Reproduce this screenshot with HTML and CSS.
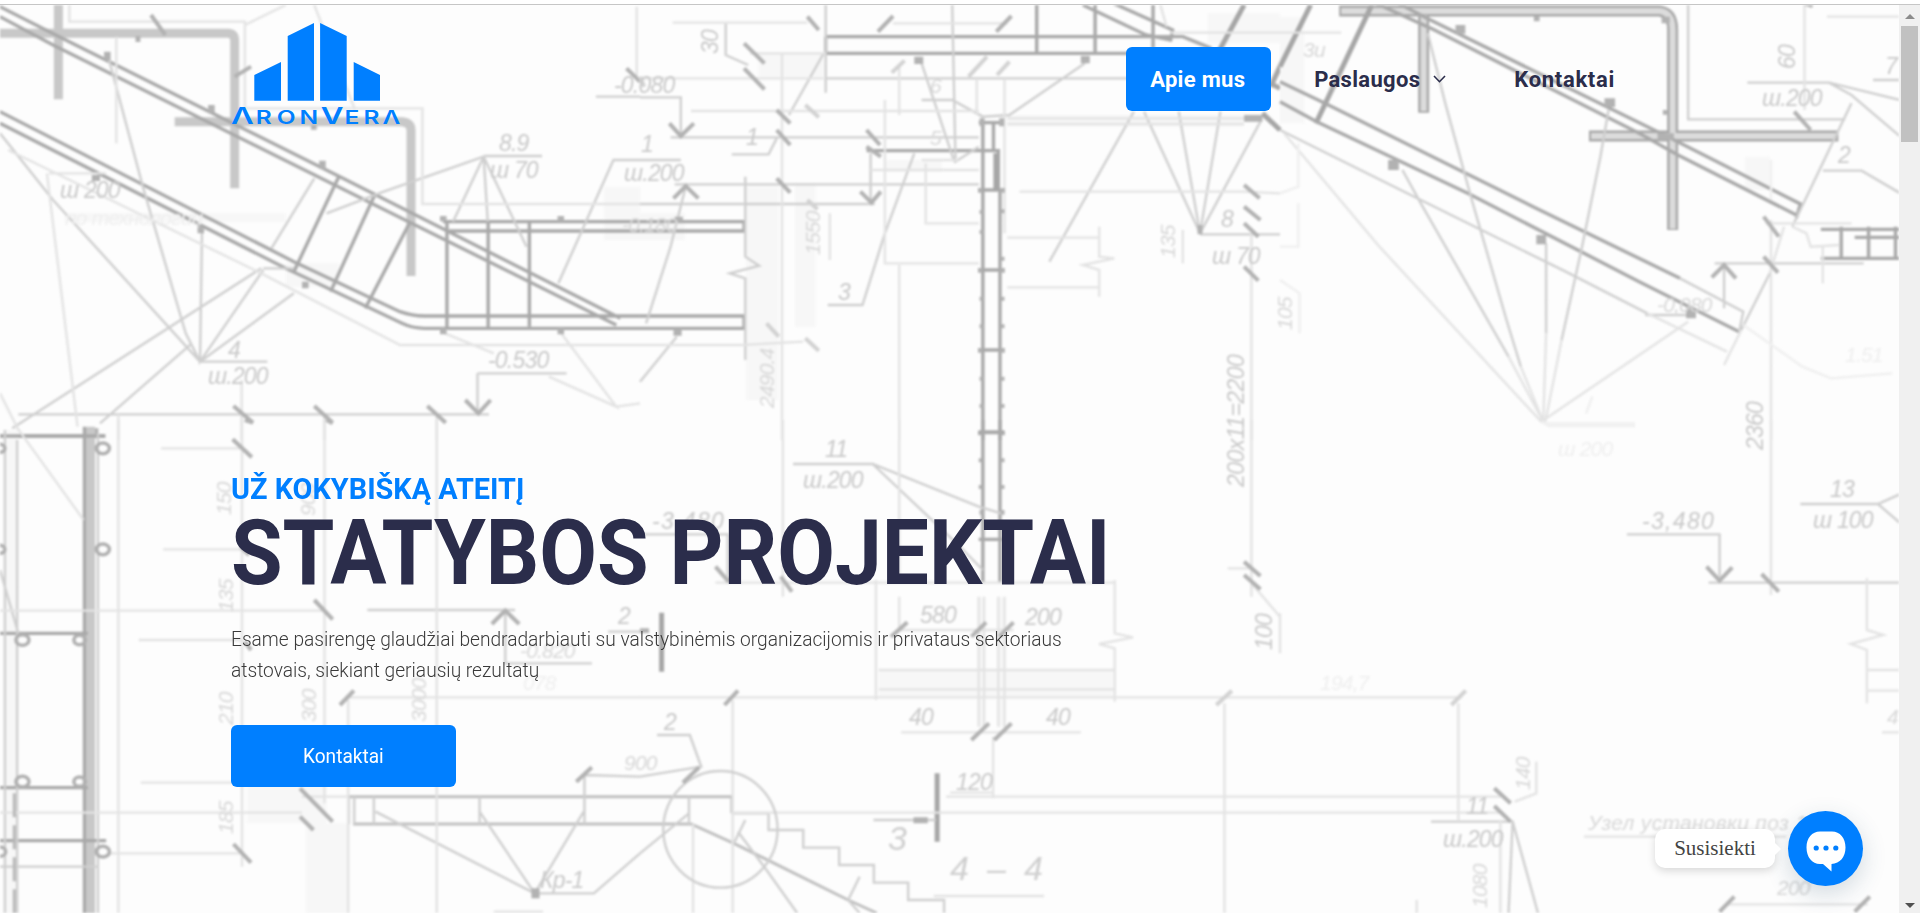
FILE: index.html
```html
<!DOCTYPE html>
<html lang="lt">
<head>
<meta charset="utf-8">
<title>AronVera</title>
<link rel="stylesheet" href="styles.css">
</head>
<body>
<div class="topline"></div>
<div class="window">
<main class="page">
<svg class="blueprint" viewBox="0 5 1899 908" aria-hidden="true">
<g transform="scale(.40816 .33333)">
<path class="haze" d="M160 640H700V665H160ZM1480 560H1568V720H1480ZM700 790H830V860H700Z"/>
<path class="t" d="M0 100H560Q575 102 575 120V565M143 15V298M428 365H985Q1007 368 1007 390V828"/>
<path class="k" d="M0 20L145 110L840 535L1520 955M0 50L130 135L820 555L1510 975M0 335L720 785L980 935Q1010 948 1040 948H1568M0 370L700 805L985 970Q1010 985 1040 985H1568M1085 665H1568M1100 693H1568M0 1308H258"/>
<path class="k" d="M830 530L720 815M918 585L810 875M1005 665L895 925M1095 665V985M1196 665V985M1297 665V980"/>
<path class="m" d="M265 170L350 560L455 1000L490 1085L130 600L0 400M495 690L490 1085L645 810M490 1085L720 880M640 805L30 1285M470 1030L245 1270M1185 470L1110 665M1185 470L1195 665M1185 470L1290 740M1185 470L940 575L800 640M1185 468H1328M490 1085H655M1170 1120H1388M1170 1120V1240M45 1243H1198M1568 480H1503L1368 850M770 535L665 745M1460 290H1568M645 805H720"/>
<path class="l" d="M170 15V65H600V325H1035V612H1568M115 520L190 1280M0 1180L45 1290M20 450L640 820L980 1035H1568M1090 1000L1210 1060M1375 1000L1510 1220L1345 1130M1510 1220L1568 1210M592 1140V1320M795 1245V1320M1070 1245V1320M290 1243V1320M120 520H260M600 75L700 15M770 15L870 330M1560 20V230M285 110V430"/>
<path class="x" d="M572 1218L620 1268M770 1218L815 1268M1047 1218L1092 1268M1140 1200L1172 1240L1202 1200M370 45L405 105M575 230L615 200M1535 205L1568 245"/>
<path class="dot" d="M255 155h16v25h-16zM510 315h16v25h-16zM782 482h16v25h-16zM332 108h12v18h-12zM225 525h20v18h-20zM484 680h16v20h-16zM740 845h16v20h-16zM1078 648h16v16h-16zM1366 648h16v16h-16zM1078 985h16v18h-16zM1366 985h16v18h-16zM762 375h14v14h-14zM205 1285h36v30h-36z"/>
</g>
<g transform="translate(640 0) scale(.40816 .33333)">
<path class="haze" d="M290 160H450V230H290ZM0 640H110V720H0ZM600 480H740V515H600ZM380 550H430V980H380ZM900 345H1480V380H900ZM1390 40H1568V130H1390ZM260 560H340V1200H260Z"/>
<path class="k" d="M455 110H1330L1400 145M455 160H1200M455 110V160M972 15V160M1115 15V160M1257 15V145M1085 15L1240 105L1300 120L1305 90L1160 10M0 665H255V693H0M0 948H255V985H0M555 452H878V570M840 360V1320M882 570V1320M830 368H890M866 370V450M830 570H890M830 810H890M830 1050H890M830 1298H890"/>
<path class="b" d="M1480 15L1420 150M1568 200L1545 260M1545 250L1568 265M1525 340L1568 390M872 460V570"/>
<path class="m" d="M455 15V278M455 235H1200M690 190L770 485M1090 190L905 345L840 350L765 300H690M765 15L773 485L830 440M0 292H100V405M75 412H830M85 553H830M0 612H575M450 160L365 345M0 480H100M225 463H315L335 415M1210 335L1003 785M1235 335L1372 700M1320 335L1372 700M1422 335L1372 700M1520 365L1372 700M1372 703H1568M672 460L600 700L545 915H460M112 560L75 740L15 970M565 460V605M210 70V165L265 195M258 530V770L292 797L220 820L258 835V1080M90 1010L0 1145"/>
<path class="l" d="M80 68H410M620 70H900M270 160H455M348 160V1320M600 300V790H830M635 795V1320M635 200V345M125 333H830M700 490V670H830M900 713H1125M900 862H1125M1125 680V770L1162 775L1085 795L1125 810V890M930 575H1480L1568 580M1498 700V1320M900 355H1480M900 372H1480M825 240V345M893 240V700M1330 690V790M465 640V780M0 1035H250L400 1025M0 235H450M1300 98H1568M565 510H830M1275 15L1290 80M690 480H780"/>
<path class="x" d="M255 130L305 190M255 205L305 268M410 50L438 90M583 95L620 48M873 95L910 48M335 330L368 370M335 390L368 435M335 535L368 578M555 390L588 435M555 440L590 470M72 370L100 408L132 370M82 595L112 558L143 595M540 575L567 608L590 575M1480 555L1518 595M1480 620L1520 660M1480 670L1515 710M1480 800L1515 842"/>
<path class="y" d="M617 218L648 182M805 230L850 170M875 225L905 185M405 315L438 352M310 970L340 1010M405 1015L438 1052M410 600L435 628M0 230L10 260"/>
<path class="dot" d="M672 170h22v22h-22zM1080 168h22v22h-22zM1480 345h45v20h-45zM85 650h20v14h-20zM82 987h20v20h-20zM1366 675h12v28h-12zM832 355h12v24h-12zM880 355h12v24h-12zM832 630h8v12h-8zM885 628h8v12h-8zM832 690h8v12h-8zM885 770h8v12h-8zM832 890h8v12h-8zM885 890h8v12h-8zM832 973h8v12h-8zM885 973h8v12h-8zM832 1130h8v12h-8zM885 1130h8v12h-8zM832 1212h8v12h-8zM885 1212h8v12h-8zM828 1292h10v14h-10zM884 1292h10v14h-10zM828 804h10v14h-10zM884 804h10v14h-10zM828 1044h10v14h-10zM884 1044h10v14h-10zM828 564h10v14h-10zM884 564h10v14h-10z"/>
</g>
<g transform="translate(1280 0) scale(.40816 .33333)">
<path class="haze" d="M0 50H60V370H0ZM1140 470H1200V570H1140Z"/>
<path class="o" d="M145 33H930Q962 38 962 90V690M352 40V338M757 408H1368"/>
<path class="oi" d="M150 33H930Q962 38 962 90V686M352 45V333M762 408H1363"/>
<path class="b" d="M75 15L0 200M225 15L88 370"/>
<path class="k" d="M235 10L370 85L880 400L975 465L1265 645M290 10L360 55L950 410L1275 612L1265 655M0 245L110 310L620 620L980 835M1125 995L880 845L460 580L90 365L0 305M1325 688H1520M1325 775H1520M1375 680V775M1442 680V775M1508 680V775M1408 712H1520"/>
<path class="m" d="M980 835L1135 935L1125 995M362 100L405 310L470 600L555 960L590 1100M805 330L785 470L740 740L690 1020M300 510L345 610L560 1070M652 730V1000M0 390L345 600L700 815L900 940M1000 15V358H1385M1400 310L1255 680M1200 820L1130 990M1345 248L1400 285L1520 410M1145 248H1345L1520 300M1330 512H1425L1520 580M1065 790H1430M1088 800V925M895 945H1000M1453 240H1520"/>
<path class="l" d="M590 1100L645 1265M690 1020L650 1265M560 1070L645 1265M652 1000L645 1265M900 940L1095 1055M1130 990L1088 1095M10 400L240 735L640 1265L1000 965M1285 15V330M1203 660V1320M1190 670H1400M1255 680L1290 700L1300 740L1370 735M1340 50H1520M0 98H150M1330 740V850M1235 680L1200 820"/>
<path class="w" d="M1135 975L1280 1100L1350 1135L1500 1120M650 1270H870M765 1190L750 1240M45 430V560L0 580M45 610V740H0M0 840L48 880V1000M1203 480V600"/>
<path class="x" d="M1260 335L1300 390M1185 650L1222 710M1185 770L1220 818M1058 832L1088 795L1117 835M1285 10L1305 18"/>
<path class="dot" d="M430 75h24v26h-24zM265 480h26v30h-26zM795 295h26v26h-26zM628 705h24v28h-24zM622 48h14v16h-14zM935 50h20v20h-20zM938 330h12v14h-12zM995 925h24v30h-24zM925 400h40v20h-40z"/>
</g>
<g transform="translate(0 420) scale(.40816 .33333)">
<path class="haze" d="M10 30H45V1479H10ZM605 1090H800V1210H605ZM750 1210H855V1479H750Z"/>
<path class="t" d="M222 20V1479"/>
<path class="k" d="M0 48H258M207 20V1479M0 640H215M0 1103H215M0 1262H260"/>
<path class="n" d="M855 1130H1568M865 1212H1568"/>
<path class="m" d="M12 30V1479M42 60V1479M0 450L45 640M240 40V1479M900 570H1262M1238 580V730H1450M0 1340H240M855 1130V1212M868 1130V1212M916 1130V1212M1175 1130V1212M1432 1060V1212M920 1175L1310 1420L1175 1175M1430 1175L1310 1420H1455L1568 1300M1435 1065L1568 1070M1490 635H1568M1570 340H1568"/>
<path class="l" d="M40 20L205 300M855 832H1568M290 0V1479M593 0V1340M795 0V1150M1070 0V1479M395 85H593M400 388H593M0 572H795M340 660H593M345 1088H600M0 1178H740M265 1300H590M853 840V1479M740 1130H855M1210 1475H1330"/>
<path class="x" d="M570 58L617 112M770 540L815 598M590 380L610 405M600 665L615 690M833 855L867 812M735 1105L815 1205M735 1190L768 1230M572 1272L615 1328M1412 1085L1450 1042M1205 612L1238 572L1272 612M600 0L620 8M800 0L815 10"/>
<path class="dash" d="M35 1120V1479"/>
<g class="ring"><circle cx="252" cy="85" r="16"/><circle cx="252" cy="388" r="16"/><circle cx="55" cy="660" r="16"/><circle cx="195" cy="660" r="14"/><circle cx="55" cy="1085" r="16"/><circle cx="195" cy="1085" r="14"/><circle cx="252" cy="1295" r="16"/><circle cx="0" cy="85" r="12"/><circle cx="0" cy="388" r="12"/><circle cx="0" cy="1295" r="14"/></g>
<path class="dot" d="M1302 1405h20v30h-20z"/>
</g>
<g transform="translate(640 420) scale(.40816 .33333)">
<path class="haze" d="M585 750H1160V830H585ZM830 530H845V920H830ZM878 530H895V920H878Z"/>
<path class="k" d="M840 0V490M882 0V490M830 36H892M830 358H890"/>
<path class="n" d="M0 1130H225V1180M0 1212H125L230 1270L510 1440L580 1479"/>
<path class="b" d="M53 578V755M728 1060V1265"/>
<path class="m" d="M375 132H570L830 260L885 280M570 132L780 375L840 450M0 343H215V470M225 1180H315V1230H400V1283H488V1335H573V1388H657V1440H745V1479M120 1130V1212M120 1180L0 1300M258 1200L230 1270M538 1370L510 1440L538 1479M572 1200H725M240 1235L310 1350L385 1479M42 945H122L150 1040L0 1070"/>
<path class="l" d="M0 832H1568M185 488H1165M640 937H1080M865 950V1135M350 0V530M635 0V490M635 530V630H915M578 480V840M1163 480V640L1208 652L1125 672L1163 685V845M585 750H1163M585 808H1163M830 530V920M843 530V920M878 530V920M893 530V920M227 840V1479M1432 850V1479M1498 0V530M1498 490L1568 590M750 1130H1568M225 1178H1568M130 1212V1479M720 1428H990M760 1118H865M1440 445H1500"/>
<ellipse class="m" cx="197" cy="1228" rx="140" ry="175"/>
<path class="x" d="M615 650L655 607M812 650L848 607M880 650L915 607M812 960L855 910M868 960L910 910M207 855L240 812M1480 425L1520 468M1480 465L1520 508M105 1088L145 1042M345 470L372 515M185 440L215 482L240 460"/>
<path class="y" d="M1412 855L1450 812"/>
<path class="dot" d="M670 1192h35v18h-35zM830 115h8v12h-8zM885 115h8v12h-8zM830 195h8v12h-8zM885 195h8v12h-8zM832 270h8v14h-8zM885 270h8v14h-8zM0 625h22v14h-22z"/>
</g>
<g transform="translate(1280 420) scale(.40816 .33333)">
<path class="m" d="M850 343H1077V470M1050 488H1520M1275 252H1465L1520 222M1465 252L1520 310M370 1205H570L560 1479M570 1205L632 1479"/>
<path class="l" d="M1090 1453H1440M0 1130H540M1438 475V630L1478 645L1398 672L1438 690V850M1440 750H1520M1440 812H1520M1203 0V525M0 832H445M437 850V1200M0 1178H540M628 1025V1120L575 1145M745 1250H1240M0 580V700M1475 937H1520M540 1200V1479M335 1440V1479"/>
<path class="w" d="M640 5L660 18H870"/>
<path class="x" d="M1045 440L1077 482L1108 442M1180 462L1222 515M525 1105L565 1150M525 1158L565 1205M1077 1475L1113 1430M1408 1475L1445 1430"/>
<path class="y" d="M420 855L455 812"/>
</g>
<g class="notes">
<text x="499" y="151">8.9</text><text x="490" y="178">ш 70</text><text x="60" y="198">ш 200</text><text class="f" x="65" y="225">по технологии</text>
<text x="228" y="358">4</text><text x="208" y="384">ш.200</text><text x="488" y="368">-0.530</text>
<text x="641" y="152">1</text><text x="624" y="181">ш.200</text><text x="614" y="93">-0.080</text><text class="s" x="622" y="232">-0.180</text>
<text transform="translate(718 54) rotate(-90)">30</text><text x="746" y="145">1</text><text x="838" y="300">3</text><text class="s" x="930" y="145">5</text><text class="s" x="930" y="93">6</text>
<text x="1221" y="227">8</text><text x="1212" y="264">ш 70</text><text class="s" transform="translate(1175 258) rotate(-90)">135</text><text class="s" transform="translate(1292 330) rotate(-90)">105</text>
<text transform="translate(1244 487) rotate(-90)" textLength="132">200x11=2200</text><text class="s" transform="translate(774 408) rotate(-90)">2490.4</text><text class="s" transform="translate(820 255) rotate(-90)">1550</text><text transform="translate(1272 650) rotate(-90)">100</text>
<text class="s" x="1303" y="57">3и</text><text transform="translate(1795 69) rotate(-90)">60</text><text x="1762" y="106">ш.200</text><text x="1885" y="74">7</text><text x="1838" y="163">2</text>
<text x="1657" y="312" class="s">-0,080</text><text transform="translate(1763 450) rotate(-90)">2360</text><text class="f" x="1845" y="362">1.51</text><text class="f" x="1558" y="456">ш 200</text>
<text x="1830" y="497">13</text><text x="1813" y="528">ш 100</text><text x="1642" y="529" textLength="71">-3,480</text><text x="652" y="529" textLength="71">-3,480</text>
<text x="825" y="457">11</text><text x="803" y="488">ш.200</text><text x="920" y="623">580</text><text x="1025" y="625">200</text>
<text x="909" y="725">40</text><text x="1046" y="725">40</text><text x="956" y="790">120</text><text x="888" y="850" class="g">3</text><text x="618" y="624">2</text><text x="664" y="730">2</text><text class="s" x="624" y="770">900</text>
<text class="g" x="950" y="880" textLength="92">4 – 4</text><text x="540" y="888">Кр-1</text><text class="s" x="520" y="658">-0.820</text><text class="f" x="523" y="690">078</text>
<text class="s" transform="translate(231 515) rotate(-90)">150</text><text class="s" transform="translate(233 612) rotate(-90)">135</text><text class="s" transform="translate(233 725) rotate(-90)">210</text><text class="s" transform="translate(233 834) rotate(-90)">185</text><text class="s" transform="translate(315 516) rotate(-90)">900</text><text class="s" transform="translate(316 722) rotate(-90)">300</text><text class="s" transform="translate(426 722) rotate(-90)">3000</text>
<text x="1466" y="814">11</text><text x="1443" y="847">ш.200</text><text class="s" transform="translate(1530 790) rotate(-90)">140</text><text class="f" x="1320" y="690">194,7</text><text class="s" x="1588" y="830" textLength="230">Узел установки поз 12</text><text class="s" x="1777" y="895">200</text><text class="s" transform="translate(1487 908) rotate(-90)">1080</text><text class="s" x="1887" y="724">4</text>
</g>
</svg>
<header class="header">
<a class="brand" aria-label="AronVera">
<svg class="logo" viewBox="231 22 172 104">
<path d="M254.3 75L281 62V100.7H254.3ZM287.7 36L314 23V100.7H287.7ZM320.1 23L346.7 36V100.7H320.1ZM353.7 62L380 75V100.7H353.7Z"/>
<g transform="translate(231 124) scale(1.36 1)"><text><tspan class="cap" x="0">Λ</tspan><tspan x="18.2 33.6 50.4">RON</tspan><tspan class="cap" x="66">V</tspan><tspan x="83.5 97.5 111.4">ERΛ</tspan></text></g>
</svg>
</a>
<nav class="nav">
<a class="nav-item active"><span>Apie mus</span></a>
<a class="nav-item drop"><span>Paslaugos</span><svg class="chevron" viewBox="0 0 13 8"><path d="M1 1L6.5 6.7L12 1"/></svg></a>
<a class="nav-item last"><span>Kontaktai</span></a>
</nav>
</header>
<section class="hero">
<p class="kicker">UŽ KOKYBIŠKĄ ATEITĮ</p>
<h1 class="title">STATYBOS PROJEKTAI</h1>
<p class="lead">Esame pasirengę glaudžiai bendradarbiauti su valstybinėmis organizacijomis ir privataus sektoriaus<br>atstovais, siekiant geriausių rezultatų</p>
<a class="cta"><span>Kontaktai</span></a>
</section>
<div class="chat">
<span class="bubble">Susisiekti</span>
<span class="chat-btn"><svg viewBox="0 0 40 42"><path d="M14 .5H26C34 .5 39.5 7 39.5 16.5S34 32.5 25.5 33V40.5L17 33H14C6 33 .5 26 .5 16.5S6 .5 14 .5Z"/><g class="dots"><circle cx="10.2" cy="17" r="2.6"/><circle cx="20" cy="17" r="2.6"/><circle cx="29.8" cy="17" r="2.6"/></g></svg></span>
</div>
</main>
<div class="scrollbar"><i class="up"></i><i class="thumb"></i><i class="down"></i></div>
</div>
</body>
</html>
```
FILE: styles.css
```css
* { box-sizing: border-box; }
body { margin: 0; height: 913px; overflow: hidden; display: flex; flex-direction: column; font-family: Roboto, "Noto Sans", sans-serif; background: #fff; }
.topline { flex: 0 0 5px; border-bottom: 1px solid #c6c6c6; }
.window { flex: 1; display: flex; min-height: 0; }
.page { flex: 1; position: relative; background: #fdfdfd; overflow: hidden; }

/* technical drawing behind the hero */
.blueprint { position: absolute; inset: 0; width: 1899px; height: 908px; filter: blur(1px); }
.blueprint path, .blueprint circle, .blueprint ellipse { fill: none; vector-effect: non-scaling-stroke; }
.blueprint .t { stroke: #c8c8c8; stroke-width: 9; }
.blueprint .o { stroke: #a8a8a8; stroke-width: 11; }
.blueprint .oi { stroke: #dcdcdc; stroke-width: 6; }
.blueprint .b { stroke: #a6a6a6; stroke-width: 5; }
.blueprint .k { stroke: #a9a9a9; stroke-width: 3.4; }
.blueprint .n { stroke: #c0c0c0; stroke-width: 3; }
.blueprint .m { stroke: #cfcfcf; stroke-width: 2.4; }
.blueprint .l { stroke: #e3e3e3; stroke-width: 2.4; }
.blueprint .w { stroke: #efefef; stroke-width: 2.4; }
.blueprint .x { stroke: #b2b2b2; stroke-width: 4; }
.blueprint .y { stroke: #d2d2d2; stroke-width: 4; }
.blueprint .dash { stroke: #b8b8b8; stroke-width: 3; stroke-dasharray: 24 8; }
.blueprint .ring circle { stroke: #b0b0b0; stroke-width: 3.5; }
.blueprint .dot { fill: #b2b2b2; }
.blueprint .haze { fill: #f7f7f7; }
.notes text { font: italic 23px "Liberation Sans", sans-serif; letter-spacing: -.8px; fill: #c9c9c9; }
.notes .s { font-size: 21px; fill: #d8d8d8; }
.notes .f { font-size: 21px; fill: #efefef; }
.notes .g { font-size: 34px; fill: #cfcfcf; }

.header { position: relative; display: flex; justify-content: space-between; padding: 17px 260px 0 231px; height: 120px; }
.logo { display: block; width: 172px; height: 104px; fill: #007fff; }
.logo text { font: 600 18px Inter, sans-serif; }
.logo .cap { font-size: 23px; }
.nav { display: flex; align-items: flex-start; gap: 19px; padding-top: 25px; }
.nav-item { height: 64px; display: flex; align-items: center; padding: 0 24px; font-size: 22px; font-weight: 700; letter-spacing: .3px; color: #2b2d4b; border-radius: 6px; white-space: nowrap; }
.active { width: 145px; background: #007fff; color: #fff; }
.drop { gap: 13px; }
.last { letter-spacing: .7px; padding-left: 25px; }
.chevron { width: 13px; height: 8px; fill: none; stroke: #2b2d4b; stroke-width: 1.6; }

.hero { position: relative; padding: 346px 0 0 231px; display: flex; flex-direction: column; align-items: flex-start; white-space: nowrap; }
.kicker, .title, .lead { transform-origin: 0 50%; }
.kicker { margin: 0; font-size: 30px; line-height: 36px; font-weight: 700; color: #007fff; transform: scaleX(.962); }
.title { margin: 0; font-size: 90px; line-height: 94px; font-weight: 700; color: #2b2d4b; transform: scaleX(.931); }
.lead { margin: 23px 0 0; font-size: 20.4px; line-height: 31px; font-weight: 300; color: #3a3a3a; transform: scaleX(.939); }
.cta { margin-top: 39px; width: 225px; height: 62px; border-radius: 6px; background: #007fff; color: #fff; display: flex; align-items: center; justify-content: center; font-size: 20.5px; }
.cta span { transform: scaleX(.93); }

.chat { position: absolute; right: 36px; bottom: 27px; display: flex; align-items: center; gap: 13px; }
.bubble { position: relative; width: 120px; height: 39px; display: flex; align-items: center; justify-content: center; background: #fff; border-radius: 10px; box-shadow: 0 3px 8px rgba(0,0,0,.15); font: 21px "Liberation Serif", serif; color: #444; }
.bubble::after { content: ""; position: absolute; left: 120px; top: 14px; border: 6px solid transparent; border-left-color: #fff; border-right: 0; }
.chat-btn { width: 75px; height: 75px; border-radius: 50%; background: #007fff; display: flex; align-items: center; justify-content: center; box-shadow: 0 8px 24px rgba(40,80,110,.2); }
.chat-btn svg { width: 40px; height: 42px; margin-top: 6px; fill: #fff; }
.dots { fill: #007fff; }

.scrollbar { width: 21px; background: #f0f0f0; display: flex; flex-direction: column; align-items: center; }
.up { margin-top: 9px; border: 5px solid transparent; border-top: 0; border-bottom-color: #8b8b8b; }
.thumb { margin-top: 7px; width: 17px; height: 116px; background: #c1c1c1; }
.down { margin-top: auto; margin-bottom: 5px; border: 5px solid transparent; border-bottom: 0; border-top-color: #505050; }
```
